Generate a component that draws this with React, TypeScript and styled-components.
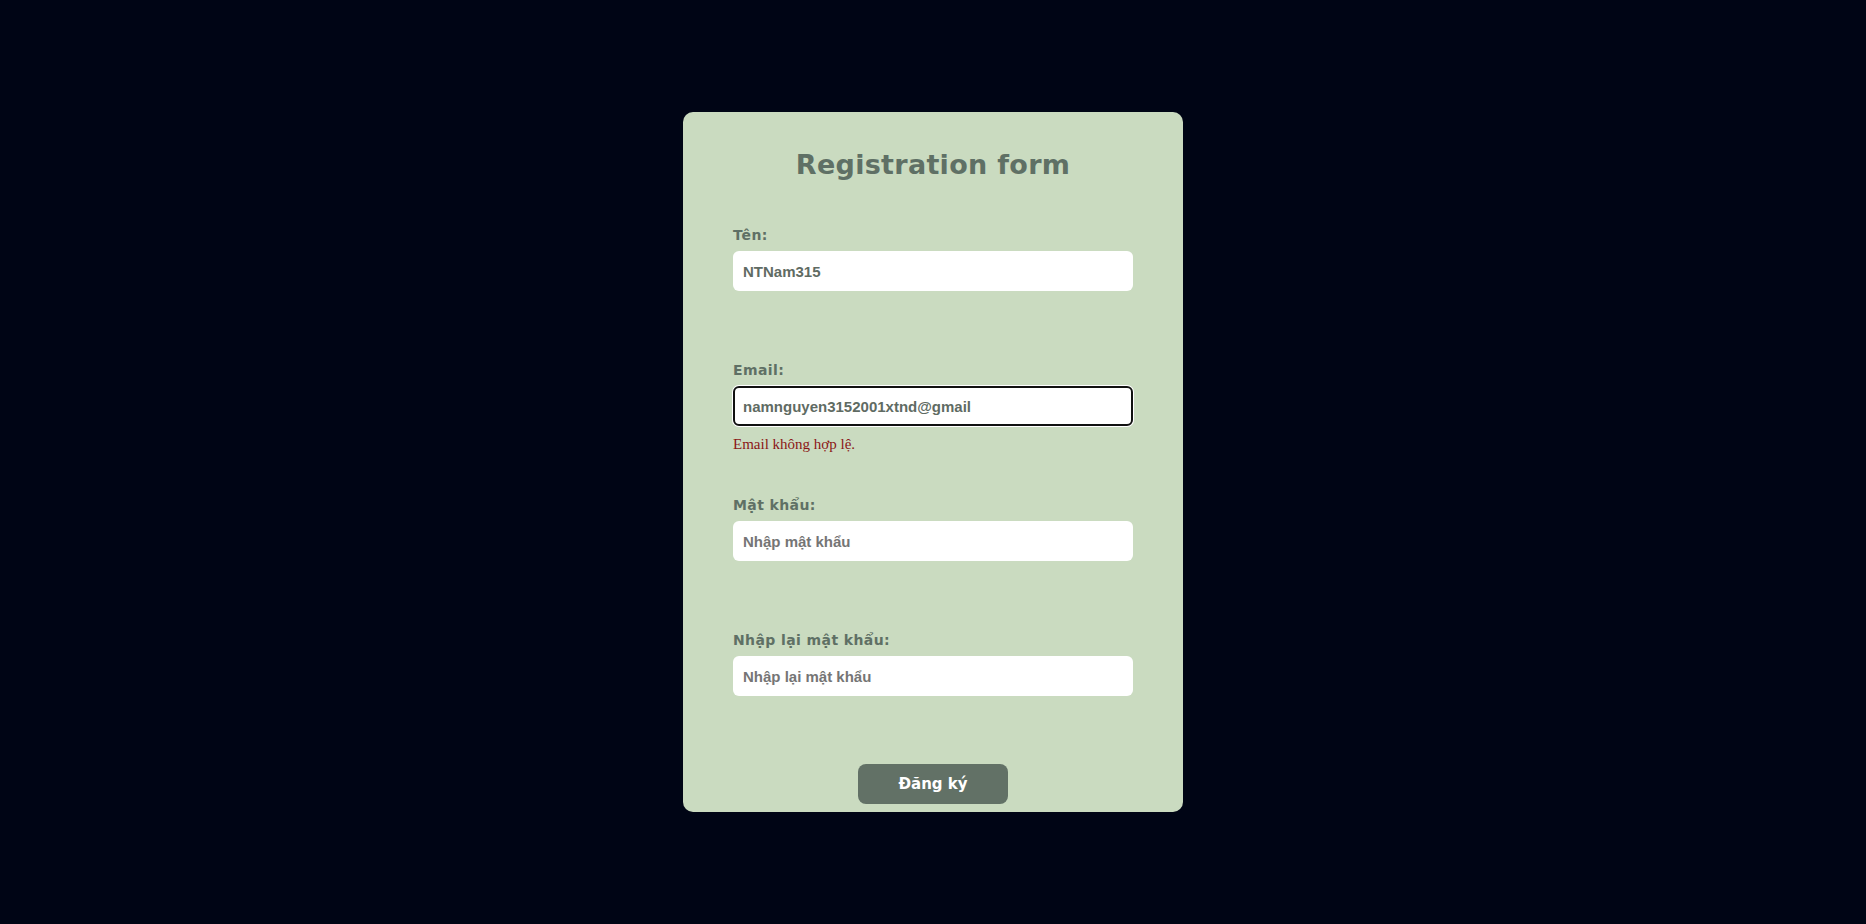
import React from "react";
import styled, { createGlobalStyle } from "styled-components";

const GlobalStyle = createGlobalStyle`
  html, body { margin: 0; padding: 0; }
  body {
    background: #000515;
    font-family: "Comic Sans MS", "DejaVu Sans", sans-serif;
  }
`;

const Page = styled.div`
  width: 100vw;
  height: 100vh;
  display: flex;
  align-items: center;
  justify-content: center;
  background: #000515;
`;

const Card = styled.form`
  box-sizing: border-box;
  width: 500px;
  height: 700px;
  background: #cadbc0;
  border-radius: 10px;
  padding: 33px 50px 0;
  display: flex;
  flex-direction: column;
`;

const Title = styled.h1`
  margin: 0 0 40px;
  text-align: center;
  font-family: "Comic Sans MS", "DejaVu Sans", sans-serif;
  font-size: 27px;
  line-height: 40px;
  font-weight: 700;
  color: #5f7065;
  letter-spacing: 0.3px;
`;

const Group = styled.div`
  display: flex;
  flex-direction: column;
  margin-bottom: 41px;
`;

const Label = styled.label`
  font-family: "Comic Sans MS", "DejaVu Sans", sans-serif;
  font-size: 14px;
  font-weight: 700;
  line-height: 20px;
  color: #5f7065;
  margin-bottom: 6px;
  letter-spacing: 0.4px;
`;

const Input = styled.input<{ $focused?: boolean }>`
  box-sizing: border-box;
  width: 400px;
  height: 40px;
  border: ${(p) => (p.$focused ? "2px solid #111" : "none")};
  border-radius: 6px;
  outline: none;
  box-shadow: ${(p) => (p.$focused ? "0 0 0 1px #ffffff" : "none")};
  background: #ffffff;
  padding: 0 ${(p) => (p.$focused ? "8px" : "10px")};
  font-family: "Liberation Sans", Arial, sans-serif;
  font-size: 15px;
  font-weight: 700;
  color: #5f6b63;

  &::placeholder {
    color: #757575;
  }
`;

const ErrorText = styled.div`
  min-height: 20px;
  margin-top: 8px;
  font-family: "Liberation Serif", "Times New Roman", serif;
  font-size: 15px;
  line-height: 20px;
  color: #8b1616;
`;

const Button = styled.button`
  align-self: center;
  margin-top: -1px;
  width: 150px;
  height: 40px;
  border: none;
  border-radius: 8px;
  background: #627166;
  color: #ffffff;
  font-family: "Comic Sans MS", "DejaVu Sans", sans-serif;
  font-size: 15px;
  font-weight: 700;
  cursor: pointer;
`;

export default function App() {
  return (
    <>
      <GlobalStyle />
      <Page>
        <Card onSubmit={(e) => e.preventDefault()}>
          <Title>Registration form</Title>
          <Group>
            <Label>Tên:</Label>
            <Input defaultValue="NTNam315" />
            <ErrorText />
          </Group>
          <Group>
            <Label>Email:</Label>
            <Input $focused defaultValue="namnguyen3152001xtnd@gmail" />
            <ErrorText>Email không hợp lệ.</ErrorText>
          </Group>
          <Group>
            <Label>Mật khẩu:</Label>
            <Input type="text" placeholder="Nhập mật khẩu" />
            <ErrorText />
          </Group>
          <Group>
            <Label>Nhập lại mật khẩu:</Label>
            <Input type="text" placeholder="Nhập lại mật khẩu" />
            <ErrorText />
          </Group>
          <Button type="submit">Đăng ký</Button>
        </Card>
      </Page>
    </>
  );
}
